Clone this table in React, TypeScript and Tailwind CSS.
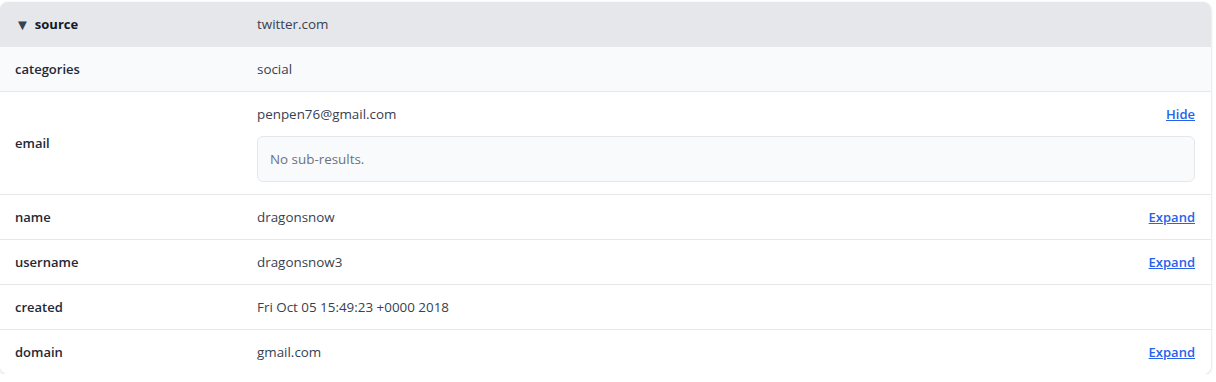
import React from 'react';

type Row = { label: string; value: string; action?: string; sub?: string };

const rows: Row[] = [
  { label: 'categories', value: 'social' },
  { label: 'email', value: 'penpen76@gmail.com', action: 'Hide', sub: 'No sub-results.' },
  { label: 'name', value: 'dragonsnow', action: 'Expand' },
  { label: 'username', value: 'dragonsnow3', action: 'Expand' },
  { label: 'created', value: 'Fri Oct 05 15:49:23 +0000 2018' },
  { label: 'domain', value: 'gmail.com', action: 'Expand' },
];

const App: React.FC = () => {
  return (
    <div
      className="bg-white pt-[2px] text-[13px] leading-5"
      style={{ fontFamily: '"Open Sans", "Noto Sans", sans-serif' }}
    >
      <div className="w-[1211px] rounded-lg bg-white shadow-[0_1px_3px_rgba(0,0,0,0.18)] overflow-hidden">
        {/* Header */}
        <div className="flex items-center bg-[#e5e7eb] py-3 border-b border-[#e5e7eb]">
          <div className="w-[257px] shrink-0 pl-[15px] flex items-center gap-[5px] font-bold text-[#111827]">
            <span className="text-[15px] leading-5 text-[#374151]">▼</span>
            <span>source</span>
          </div>
          <div className="text-[13.4px] text-[#374151]">twitter.com</div>
        </div>

        {rows.map((row, i) => (
          <div
            key={row.label}
            className={`flex items-center py-3 pr-4 ${i < rows.length - 1 ? 'border-b border-[#e5e7eb]' : ''} ${
              i === 0 ? 'bg-[#f9fafb]' : 'bg-white'
            }`}
          >
            <div className="w-[257px] shrink-0 pl-[15px] font-semibold text-[#1f2937]">{row.label}</div>
            <div className="flex-1 min-w-0">
              <div className="flex items-center justify-between">
                <span className="text-[13.4px] text-[#374151]">{row.value}</span>
                {row.action && (
                  <a href="#" className="font-semibold text-[#2563eb] underline">
                    {row.action}
                  </a>
                )}
              </div>
              {row.sub && (
                <div className="mt-3 rounded-md border border-[#e5e7eb] bg-[#f9fafb] p-3 text-[13.4px] text-[#6b7280]">
                  {row.sub}
                </div>
              )}
            </div>
          </div>
        ))}
      </div>
    </div>
  );
};

export default App;
